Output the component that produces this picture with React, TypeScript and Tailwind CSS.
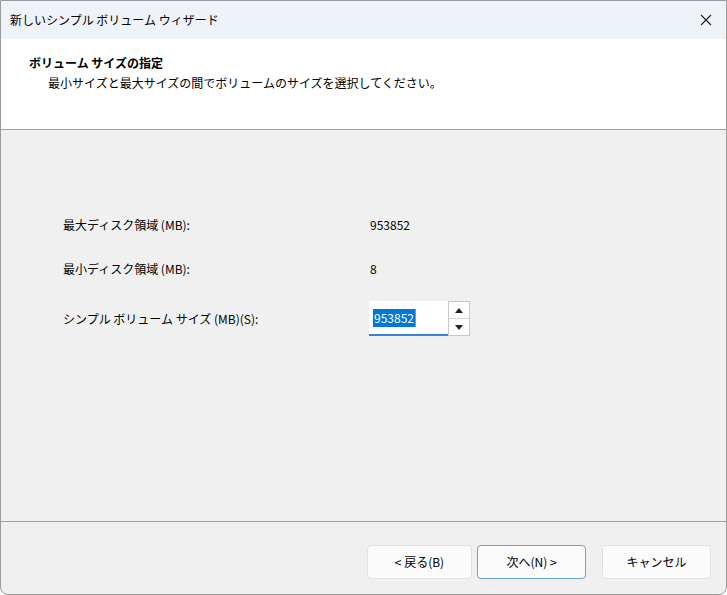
export default function App() {
  const f = { fontFamily: '"Noto Sans CJK JP", "Noto Sans", sans-serif' };
  return (
    <div style={f} className="w-[727px] h-[595px] bg-[#f0f0f0] text-[12px] text-black flex flex-col overflow-hidden border border-[#9a9a9a] rounded-b-[8px]">
      <div className="h-[38px] bg-[#eef2f9] flex items-center justify-between pl-[9px] pr-[14px] shrink-0">
        <span className="text-[12px]">新しいシンプル ボリューム ウィザード</span>
        <svg width="12" height="12" viewBox="0 0 12 12"><path d="M1 1L11 11M11 1L1 11" stroke="#222" strokeWidth="1.1" /></svg>
      </div>
      <div className="h-[91px] bg-white border-b border-[#a0a0a0] pl-[28px] pt-[14px] shrink-0">
        <div className="font-bold leading-[20px]">ボリューム サイズの指定</div>
        <div className="pl-[19px] leading-[19px]">最小サイズと最大サイズの間でボリュームのサイズを選択してください。</div>
      </div>
      <div className="flex-1 pl-[62px] pt-[85px]">
        <div className="flex items-center h-[20px]"><span className="w-[307px]">最大ディスク領域 (MB):</span><span>953852</span></div>
        <div className="flex items-center h-[20px] mt-[24px]"><span className="w-[307px]">最小ディスク領域 (MB):</span><span>8</span></div>
        <div className="flex items-center mt-[22px]">
          <span className="w-[306px]">シンプル ボリューム サイズ (MB)(S):</span>
          <div className="flex h-[35px] bg-white">
            <div className="w-[79px] border-b-2 border-[#3c7fd6] flex items-center pl-[4px]">
              <span className="bg-[#0078d7] text-white px-[1px] leading-[18px] border-r border-[#e08040]">953852</span>
            </div>
            <div className="w-[22px] border border-[#c8c8c8] flex flex-col">
              <div className="flex-1 flex items-center justify-center border-b border-[#d8d8d8]"><svg width="8" height="5"><path d="M0 5L4 0L8 5Z" fill="#222"/></svg></div>
              <div className="flex-1 flex items-center justify-center"><svg width="8" height="5"><path d="M0 0L4 5L8 0Z" fill="#222"/></svg></div>
            </div>
          </div>
        </div>
      </div>
      <div className="h-[73px] border-t border-[#a0a0a0] shrink-0 flex items-start pt-[23px] pl-[366px]">
        <button className="w-[105px] h-[34px] bg-[#fbfbfb] border border-[#e0e0e0] rounded-[4px]">&lt; 戻る(B)</button>
        <button className="ml-[5px] w-[109px] h-[34px] bg-[#fbfbfb] border border-[#6aa0dc] rounded-[4px]">次へ(N) &gt;</button>
        <button className="ml-[16px] w-[109px] h-[34px] bg-[#fbfbfb] border border-[#e0e0e0] rounded-[4px]">キャンセル</button>
      </div>
    </div>
  );
}
